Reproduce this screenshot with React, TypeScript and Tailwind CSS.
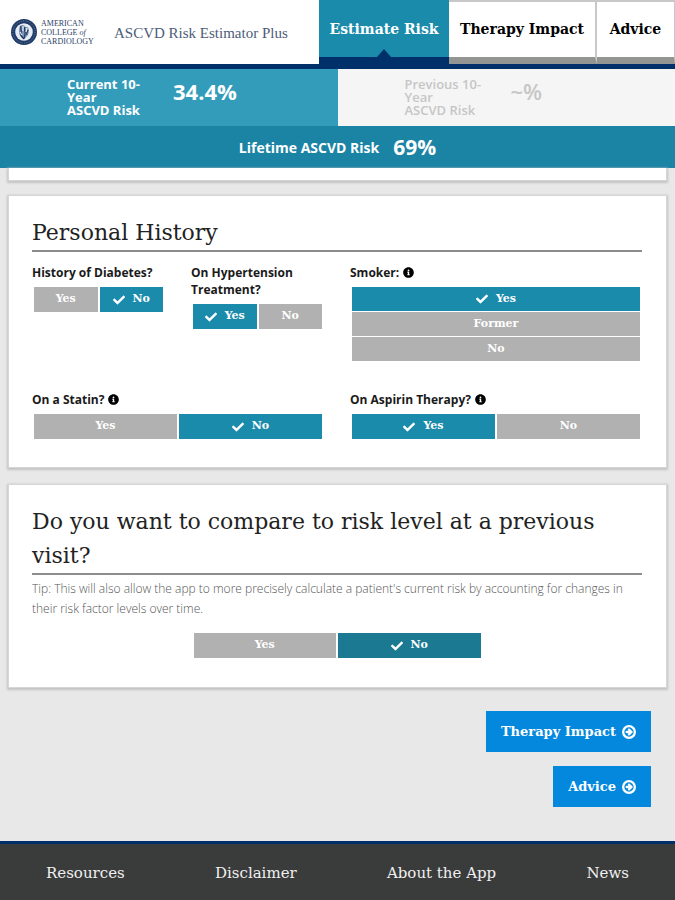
import { useState } from "react";
import { CircleArrowRight } from "lucide-react";
import { FaCheck, FaInfoCircle } from "react-icons/fa";
import clsx from "clsx";

const slab = "font-['Roboto_Slab','DejaVu_Serif',serif]";

const tabs = ["Estimate Risk", "Therapy Impact", "Advice"];
const footerLinks = ["Resources", "Disclaimer", "About the App", "News"];

const Seal = () => (
  <svg viewBox="0 0 28 28" className="size-7 shrink-0" aria-hidden>
    <circle cx="14" cy="14" r="13" fill="#1f3a66" />
    <circle cx="14" cy="14" r="11" fill="none" stroke="#6f86a8" strokeWidth="1" strokeDasharray="1 1.3" />
    <circle cx="14" cy="14" r="8.8" fill="#e6ecf3" />
    <path d="M10 8c2-2 5-1 5 1 2-1 4 1 4 3 0 4-2 7-5 9-3-1-5-4-5-7 0-3 0-4 1-6z" fill="#7f95b3" />
    <path d="M11 8c-1 3 1 4 0 7s1 4 3 6M15 9c-2 3 1 4 0 7 0 2-1 3-1 5M18 12c-1 2-2 3-1 5" fill="none" stroke="#1f3a66" strokeWidth="1.2" />
    <path d="M13 8v5M17 10l-1 4M10 14l2 3" fill="none" stroke="#fff" strokeWidth="1" />
  </svg>
);

const Header = () => (
  <header className="flex h-[69px] border-b-[5px] border-[#00306a] bg-white">
    <div className="flex flex-1 items-center gap-4 pl-[10px] text-[#2d4268] font-['Liberation_Serif',serif]">
      <div className="flex items-center gap-[3px]">
        <Seal />
        <div className="w-[57px] text-[8px] leading-[9px] whitespace-nowrap">
          <div>AMERICAN</div>
          <div>
            COLLEGE <i>of</i>
          </div>
          <div>CARDIOLOGY</div>
        </div>
      </div>
      <h1 className="pt-0.5 text-[15px] whitespace-nowrap text-[#4c5c78]">ASCVD Risk Estimator Plus</h1>
    </div>
    <nav className={clsx("flex text-[14px] font-bold", slab)}>
      {tabs.map((tab, i) => (
        <a
          key={tab}
          href="#"
          aria-current={i === 0 ? "page" : undefined}
          className={clsx(
            "relative flex items-center justify-center border-b-[7px] whitespace-nowrap",
            i === 0 && "w-[130px] border-[#00306a] bg-[#1b8bab] pt-0.5 text-white",
            i === 1 && "w-[148px] border-t-2 border-r-2 border-t-[#c8c8c8] border-r-[#c8c8c8] border-b-[#929592] text-black",
            i === 2 && "w-[78px] border-t-2 border-r border-t-[#c8c8c8] border-r-[#c8c8c8] border-b-[#929592] text-black"
          )}
        >
          {tab}
          {i === 0 && (
            <span
              aria-hidden
              className="absolute bottom-0 left-1/2 -translate-x-1/2 border-x-[7px] border-b-[8px] border-x-transparent border-b-[#00306a]"
            />
          )}
        </a>
      ))}
    </nav>
  </header>
);

const RiskBar = () => (
  <section className="font-bold text-white">
    <div className="grid h-[57px] grid-cols-2">
      <div className="flex gap-[26px] bg-[#349cbb] pt-[9px] pl-[67px]">
        <p className="w-20 text-[13px] leading-[13px]">{"Current 10-Year ASCVD\u00a0Risk"}</p>
        <p className="text-[22px] leading-[26px]">34.4%</p>
      </div>
      <div className="flex gap-[26px] bg-[#f5f5f5] pt-[9px] pl-[67px] font-semibold text-[#c6c6c6]">
        <p className="w-20 text-[13px] leading-[13px]">{"Previous 10-Year ASCVD\u00a0Risk"}</p>
        <p className="text-[22px] leading-[26px]">~%</p>
      </div>
    </div>
    <div className="flex h-[42px] items-center justify-center gap-[14px] bg-[#1b84a4]">
      <span className="text-[14px]">Lifetime ASCVD Risk</span>
      <span className="pt-0.5 text-[21px]">69%</span>
    </div>
  </section>
);

type ChoiceProps = {
  label: string;
  options: string[];
  initial: string;
  stacked?: boolean;
  activeClass?: string;
};

const Choice = ({ label, options, initial, stacked, activeClass = "bg-[#1b8bab]" }: ChoiceProps) => {
  const [value, setValue] = useState(initial);

  return (
    <div role="group" aria-label={label} className={clsx("mx-0.5 flex", stacked ? "flex-col gap-px" : "gap-0.5")}>
      {options.map((option) => (
        <button
          key={option}
          type="button"
          aria-pressed={value === option}
          onClick={() => setValue(option)}
          className={clsx(
            "flex items-center justify-center gap-2 text-[11px] font-bold text-white",
            slab,
            stacked ? "h-6" : "h-[25px] flex-1",
            value === option ? activeClass : "bg-[#b1b1b1]"
          )}
        >
          {value === option && <FaCheck className="size-3" />}
          {option}
        </button>
      ))}
    </div>
  );
};

const Question = ({ info, className, ...choice }: ChoiceProps & { info?: boolean; className?: string }) => (
  <div className={className}>
    <h3 className="mb-1.5 flex items-center gap-1 text-[12px] leading-[17px] font-bold text-[#1a1a1a]">
      {choice.label}
      {info && <FaInfoCircle className="size-[11px] text-black" />}
    </h3>
    <Choice {...choice} />
  </div>
);

const card = "mx-2 border border-[#d6d6d6] bg-white shadow-[0_1px_2px_1px_#c4c4c4]";
const heading = "border-b-2 border-[#8c8c8c] text-[22px] leading-[34px] font-normal text-[#222]";

const ActionButton = ({ label }: { label: string }) => (
  <button
    type="button"
    className={clsx("flex h-[41px] items-center gap-1.5 bg-[#0388de] px-[15px] text-[13px] font-bold text-white", slab)}
  >
    {label}
    <CircleArrowRight className="size-[14px]" strokeWidth={4} />
  </button>
);

export default function App() {
  return (
    <div className="bg-[#e8e8e8] font-['Open_Sans',sans-serif]">
      <Header />
      <RiskBar />

      <main>
        <div className={clsx(card, "h-[13px] border-t-0")} />

        <section className={clsx(card, "mt-[14px] pt-5 pr-6 pb-7 pl-[23px]")}>
          <h2 className={clsx(heading, slab)}>Personal History</h2>
          <div className="mt-3 grid grid-cols-4 gap-x-[26px] gap-y-[30px]">
            <Question label="History of Diabetes?" options={["Yes", "No"]} initial="No" />
            <Question label="On Hypertension Treatment?" options={["Yes", "No"]} initial="Yes" />
            <Question
              className="col-span-2"
              label="Smoker:"
              info
              stacked
              options={["Yes", "Former", "No"]}
              initial="Yes"
            />
            <Question className="col-span-2" label="On a Statin?" info options={["Yes", "No"]} initial="No" />
            <Question className="col-span-2" label="On Aspirin Therapy?" info options={["Yes", "No"]} initial="Yes" />
          </div>
        </section>

        <section className={clsx(card, "mt-4 pt-5 pr-6 pb-[29px] pl-[23px]")}>
          <h2 className={clsx(heading, slab)}>Do you want to compare to risk level at a previous visit?</h2>
          <p className="mt-1 text-[12px] leading-5 font-light text-[#555]">
            Tip: This will also allow the app to more precisely calculate a patient's current risk by accounting for
            changes in their risk factor levels over time.
          </p>
          <div className="mx-auto mt-[14px] w-[291px]">
            <Choice
              label="Compare to a previous visit"
              options={["Yes", "No"]}
              initial="No"
              activeClass="bg-[#1b7992]"
            />
          </div>
        </section>

        <div className="mt-[23px] mr-6 flex flex-col items-end gap-[14px]">
          <ActionButton label="Therapy Impact" />
          <ActionButton label="Advice" />
        </div>
      </main>

      <footer className="mt-[34px] border-t-[3px] border-[#00306a] bg-[#3a3b3b]">
        <nav className={clsx("flex h-14 items-center justify-between px-[46px] pt-0.5 text-[15px] text-[#f0f0f0]", slab)}>
          {footerLinks.map((link) => (
            <a key={link} href="#">
              {link}
            </a>
          ))}
        </nav>
      </footer>
    </div>
  );
}
